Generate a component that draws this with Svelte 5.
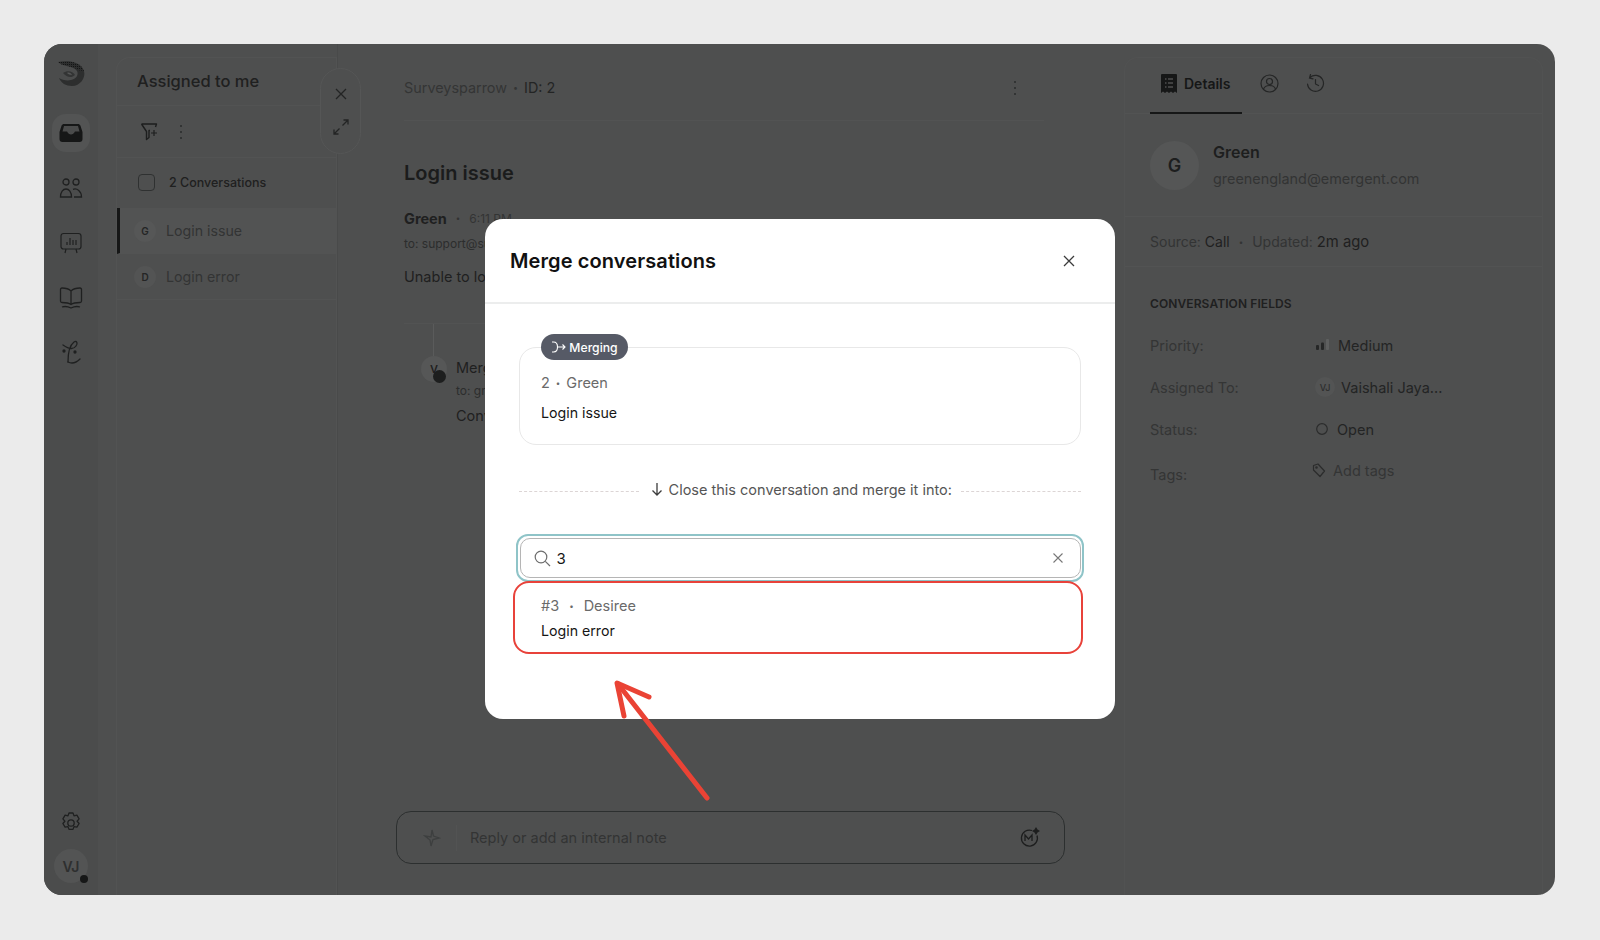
<script>
  const fields = [
    { label: 'Priority:', value: 'Medium', kind: 'priority' },
    { label: 'Assigned To:', value: 'Vaishali Jaya...', kind: 'user' },
    { label: 'Status:', value: 'Open', kind: 'status' },
    { label: 'Tags:', value: 'Add tags', kind: 'tags' }
  ];
</script>

<div class="app">
  <nav class="rail">
    <div class="logo">
      <svg width="32" height="32" viewBox="0 0 32 32" fill="none">
        <defs>
          <pattern id="speck" width="2" height="2" patternUnits="userSpaceOnUse"><rect width="1" height="1" fill="#141515"/></pattern>
        </defs>
        <path d="M3 4C12 2 26 3 29 13c2 7-4 15-12 15-6 0-11-3-13-8 3 2 8 3 12 2 5-1 8-5 6-9-2-3-6-4-10-5C8 7 5 6 3 4z" fill="#2d2e2e"/>
        <path d="M3 4C12 2 26 3 29 13l-7-1c-2-3-6-3-10-4C8 7 5 6 3 4z" fill="url(#speck)"/>
        <path d="M8 15c4-3 10-2 12 2-3 3-8 3-12-2z" fill="#333434"/>
        <path d="M12 15c2-1 4 0 5 2-2 0-4-1-5-2z" fill="#555656"/>
      </svg>
    </div>
    <div class="rail-item first"><span class="active">
      <svg width="24" height="20" viewBox="0 0 24 20"><path d="M5 1h14c1 0 2 .6 2.400 1.600L23.500 9v7a3 3 0 0 1-3 3h-17a3 3 0 0 1-3-3V9L2.600 2.600C3 1.600 4 1 5 1z" fill="#161717"/><path d="M3.500 8.500 5 3h14l1.500 5.500h-4.500c-1 2-2.500 3-4 3s-3-1-4-3z" fill="#4a4b4b"/></svg>
    </span></div>
    <div class="rail-item">
      <svg width="24" height="22" viewBox="0 0 24 22" fill="none" stroke="#1f2020" stroke-width="1.300"><circle cx="7" cy="5" r="3"/><circle cx="17" cy="5" r="3"/><path d="M1.500 20c0-5 2.500-8 5.500-8s5.500 3 5.500 8z"/><path d="M14 12.300c4-1.500 8.500 2 8.500 7.700H15"/></svg>
    </div>
    <div class="rail-item">
      <svg width="24" height="24" viewBox="0 0 24 24" fill="none" stroke="#1f2020" stroke-width="1.200"><rect x="2" y="2.500" width="20" height="15.500" rx="2.500"/><path d="M8 14v-3M11 14V7M14 14V9M17 14v-5M7 18l-1 4M17 18l1 4" /></svg>
    </div>
    <div class="rail-item">
      <svg width="24" height="24" viewBox="0 0 24 24" fill="none" stroke="#1f2020" stroke-width="1.300"><path d="M12 5c-2-2-5-3-9-3-1 0-1.500.5-1.500 1.500V15c0 1 .5 1.500 1.500 1.500 4 0 7 .5 9 2 2-1.500 5-2 9-2 1 0 1.500-.5 1.500-1.500V3.500C22.500 2.500 22 2 21 2c-4 0-7 1-9 3zM12 5v13.500M3 21c3-1 6-.5 9 1 3-1.500 6-2 9-1"/></svg>
    </div>
    <div class="rail-item">
      <svg width="44" height="44" viewBox="0 0 44 44" fill="none" stroke="#1f2020" stroke-width="1.300" stroke-linecap="round"><path d="M19 31C19 22 21 14 25 11c3-2 4 2 2 4-2 3-6 4-13-1"/><path d="M19 31c4 2 8 1 12-3"/><circle cx="15" cy="20" r="1" fill="#1f2020"/><circle cx="26" cy="21" r="1" fill="#1f2020"/></svg>
    </div>
    <div class="rail-bottom">
      <svg width="24" height="24" viewBox="0 0 24 24" fill="none" stroke="#1f2020" stroke-width="1.300"><circle cx="12" cy="12" r="3.200"/><path d="M10 2h4l1 2.800 2.900-.6 2.200 3.700-2 2.300 2 2.300-2.200 3.700-2.900-.6-1 2.800h-4l-1-2.800-2.900.6-2.200-3.700 2-2.300-2-2.300 2.200-3.700 2.900.6z" stroke-linejoin="round"/></svg>
      <div class="me">VJ<i></i></div>
    </div>
  </nav>

  <section class="list">
    <header class="list-title">Assigned to me</header>
    <div class="toolbar">
      <svg width="19" height="19" viewBox="0 0 19 19" fill="none" stroke="#1d1e1e" stroke-width="1.400" stroke-linejoin="round"><path d="M1.500 2h15l-1 3M10 8.500h-1v7l-2.500 2v-8L1.500 2"/><path d="M14 8v6M11 11h6" stroke-width="1.200"/></svg>
      <span class="vdots"><i></i><i></i><i></i></span>
    </div>
    <div class="count"><span class="check"></span>2 Conversations</div>
    <div class="row selected"><span class="dot">G</span>Login issue</div>
    <div class="row"><span class="dot">D</span>Login error</div>
  </section>

  <section class="main">
    <div class="crumbs"><span>Surveysparrow</span><b>•</b><em>ID: 2</em><span class="vdots push"><i></i><i></i><i></i></span></div>
    <h1>Login issue</h1>
    <div class="from"><strong>Green</strong><b>•</b><small>6:11 PM</small></div>
    <div class="to">to: support@su</div>
    <p class="msg">Unable to log</p>
    <div class="thread">
      <div class="thread-line"></div>
      <div class="thread-avatar">V<i></i></div>
      <div class="thread-body">
        <div class="thread-name">Merge</div>
        <div class="thread-to">to: gre</div>
        <div class="thread-msg">Conv</div>
      </div>
    </div>
    <div class="composer">
      <svg width="18" height="18" viewBox="0 0 18 18" fill="none" stroke="#3d3f3f" stroke-width="1.300"><path d="M9 1l1.500 6L16 9l-6 1.500L8 17l-1-6-5-4 6 1z"/></svg>
      <span class="sep"></span>
      <span class="placeholder">Reply or add an internal note</span>
      <svg class="ai" width="22" height="22" viewBox="0 0 22 22" fill="none" stroke="#1d1e1e" stroke-width="1.300"><path d="M14 3.500a8 8 0 1 0 5 5"/><path d="M7 14V8l3.500 4L14 8v6"/><path d="M18 0l1.500 2.500L22 4l-2.500 1.500L18 8l-1.500-2.500L14 4l2.500-1.500z" fill="#1d1e1e" stroke="none"/></svg>
    </div>
  </section>

  <aside class="side">
    <div class="tabs">
      <div class="tab">
        <svg width="16" height="19" viewBox="0 0 16 19"><path d="M1 0h14a1 1 0 0 1 1 1v18l-2-1.500L12 19l-2-1.500L8 19l-2-1.500L4 19l-2-1.500L0 19V1a1 1 0 0 1 1-1z" fill="#161717"/><path d="M4 5h1.500M7 5h5M4 9h1.500M7 9h5M4 13h1.500M7 13h5" stroke="#4f4f4f" stroke-width="1.400"/></svg>
        Details
      </div>
      <svg class="tab-i1" width="19" height="19" viewBox="0 0 19 19" fill="none" stroke="#252626" stroke-width="1.200"><circle cx="9.500" cy="9.500" r="8.500"/><circle cx="9.500" cy="7.500" r="3"/><path d="M3.500 15c1-2.500 3.500-3.500 6-3.500s5 1 6 3.500"/></svg>
      <svg class="tab-i2" width="19" height="19" viewBox="0 0 19 19" fill="none" stroke="#252626" stroke-width="1.200" stroke-linecap="round"><path d="M4 3.500A8 8 0 1 1 1.500 10M4.500 0.500 3.500 4l3.500.8M9.500 5.500V10l3 1.500"/></svg>
    </div>
    <div class="contact">
      <div class="big">G</div>
      <div><div class="c-name">Green</div><div class="c-mail">greenengland@emergent.com</div></div>
    </div>
    <div class="meta">Source: <strong>Call</strong><b>•</b>Updated: <strong>2m ago</strong></div>
    <h2>CONVERSATION FIELDS</h2>
    <div class="fields">
      {#each fields as f}
        <div class="field" class:tagrow={f.kind === 'tags'}>
          <span class="f-label">{f.label}</span>
          <span class="f-value" class:muted={f.kind === 'tags'}>
            {#if f.kind === 'priority'}
              <svg width="15" height="12" viewBox="0 0 15 12"><rect x="1" y="6" width="3" height="5" rx="1" fill="#262727"/><rect x="6" y="3.500" width="3" height="7.500" rx="1" fill="#262727"/><rect x="11" y="0" width="3" height="11" rx="1" fill="#5e5f5f"/></svg>
            {:else if f.kind === 'user'}
              <span class="vj">VJ</span>
            {:else if f.kind === 'status'}
              <svg width="14" height="14" viewBox="0 0 14 14" fill="none" stroke="#2b2c2c" stroke-width="1.200"><circle cx="7" cy="7" r="5.300"/></svg>
            {:else}
              <svg width="14" height="15" viewBox="0 0 14 15" fill="none" stroke="#2b2c2c" stroke-width="1.200" stroke-linejoin="round"><path d="M1.500 2.500 6 1l6.500 7-4.500 5.500-6.500-6.500z"/><circle cx="4.500" cy="4.500" r=".7"/></svg>
            {/if}
            {f.value}
          </span>
        </div>
      {/each}
    </div>
  </aside>

  <div class="pill">
    <svg width="12" height="12" viewBox="0 0 12 12" stroke="#232424" stroke-width="1.300"><path d="M1 1l10 10M11 1 1 11"/></svg>
    <svg width="16" height="16" viewBox="0 0 16 16" fill="none" stroke="#232424" stroke-width="1.300"><path d="M9.500 6.500 15 1M10.500 1H15v4.500M6.500 9.500 1 15M1 10.500V15h4.500"/></svg>
  </div>

  <div class="modal">
    <header class="m-head">
      <h3>Merge conversations</h3>
      <svg width="12" height="12" viewBox="0 0 12 12" stroke="#3b3b3b" stroke-width="1.300"><path d="M1 1l10 10M11 1 1 11"/></svg>
    </header>
    <div class="m-body">
      <div class="card">
        <span class="badge">
          <svg width="15" height="12" viewBox="0 0 15 12" fill="none" stroke="#fff" stroke-width="1.100"><path d="M1 1h1.500c3 0 4 2 4 5s-1 5-4 5H1M6.500 6H14M11.500 3.500 14 6l-2.500 2.500"/></svg>
          Merging
        </span>
        <div class="sub first-sub">2<b>•</b>Green</div>
        <div class="subject first">Login issue</div>
      </div>
      <div class="note">
        <span class="dash"></span>
        <svg width="12" height="14" viewBox="0 0 12 14" fill="none" stroke="#3d3d3d" stroke-width="1.300"><path d="M6 1v12M1.500 8.500 6 13l4.500-4.500"/></svg>
        <span class="note-text">Close this conversation and merge it into:</span>
        <span class="dash"></span>
      </div>
      <div class="search">
        <div class="search-in">
          <svg width="17" height="17" viewBox="0 0 17 17" fill="none" stroke="#6d6d6d" stroke-width="1.200"><circle cx="7" cy="7" r="5.800"/><path d="M11.300 11.300 16 16"/></svg>
          <span class="q">3</span>
          <svg class="clear" width="10" height="10" viewBox="0 0 10 10" stroke="#777" stroke-width="1.100"><path d="M.5.5l9 9M9.500.5l-9 9"/></svg>
        </div>
      </div>
      <div class="result">
        <div class="sub">#3<b>•</b>Desiree</div>
        <div class="subject">Login error</div>
      </div>
    </div>
  </div>

  <svg class="pointer" width="110" height="130" viewBox="0 0 110 130" fill="none" stroke="#ea4335" stroke-width="5" stroke-linecap="round" stroke-linejoin="round">
    <path d="M97 123 8 9"/>
    <path d="M39 22 7 8l7 33"/>
  </svg>
</div>

<style>
  :global(body) { margin: 0; background: #ebebeb; }
  * { box-sizing: border-box; }
  .app {
    position: relative; display: flex; width: 1511px; height: 851px; margin: 44px 0 0 44px;
    background: #4e4f4f; border-radius: 18px; overflow: hidden;
    font-family: Inter, "Liberation Sans", sans-serif; color: #1f2020;
  }
  .rail { width: 54px; flex: none; display: flex; flex-direction: column; align-items: center; background: #4b4c4c; }
  .logo { height: 62px; padding-top: 14px; }
  .rail-item { height: 55px; width: 100%; display: flex; align-items: center; justify-content: center; flex: none; }
  .rail-item.first { height: 54px; }
  .active { width: 38px; height: 38px; border-radius: 14px; background: #535454; display: flex; align-items: center; justify-content: center; }
  .rail-bottom { margin-top: auto; display: flex; flex-direction: column; align-items: center; gap: 14px; padding-bottom: 12px; }
  .me { position: relative; width: 34px; height: 34px; border-radius: 50%; background: #535454; display: flex; align-items: center; justify-content: center; font-size: 14px; font-weight: 600; color: #2e2f2f; }
  .me i { position: absolute; right: 0; bottom: 0; width: 8px; height: 8px; border-radius: 50%; background: #161717; }

  .list { width: 221px; flex: none; margin: 13px 0 0 18px; border: 1px solid #525353; border-width: 1px 1px 0 1px; border-radius: 14px 0 0 0; }
  .list-title { height: 48px; display: flex; align-items: center; padding: 0 0 2px 20px; font-size: 16.500px; font-weight: 500; color: #1f2020; border-bottom: 1px solid #525353; }
  .toolbar { height: 52px; display: flex; align-items: center; gap: 21px; padding-left: 23px; border-bottom: 1px solid #525353; }
  .vdots { display: inline-flex; flex-direction: column; gap: 4px; }
  .vdots i { width: 2px; height: 2px; border-radius: 50%; background: #2a2b2b; }
  .count { height: 50px; display: flex; align-items: center; gap: 14px; padding: 0 0 2px 21px; font-size: 12.500px; font-weight: 500; color: #1f2020; }
  .check { width: 17px; height: 17px; border: 1.500px solid #2f3131; border-radius: 4px; }
  .row { height: 46px; display: flex; align-items: center; gap: 10px; padding-left: 17px; font-size: 14.200px; color: #333434; border-bottom: 1px solid #525353; }
  .row.selected { background: #525353; border-left: 3px solid #161717; padding-left: 14px; }
  .dot { width: 22px; height: 22px; border-radius: 50%; background: #535454; display: flex; align-items: center; justify-content: center; font-size: 10px; font-weight: 600; color: #242525; }
  .selected .dot { background: #565757; }

  .main { flex: 1; min-width: 0; display: flex; flex-direction: column; padding: 0 84px 31px 66px; border-left: 1px solid #494a4a; }
  .crumbs { height: 77px; flex: none; padding-top: 11px; display: flex; align-items: center; font-size: 14.400px; color: #343535; border-bottom: 1px solid #525353; }
  .crumbs b { margin: 0 6px; font-size: 9px; font-weight: 400; }
  .crumbs em { font-style: normal; color: #232424; }
  .push { margin-left: auto; margin-right: 28px; }
  h1 { margin: 34px 0 0; font-size: 20px; line-height: 36px; font-weight: 600; color: #1b1c1c; }
  .from { margin-top: 17px; height: 20px; display: flex; align-items: center; font-size: 14.500px; }
  .from strong { font-weight: 700; }
  .from b { margin: 0 9px; font-size: 8px; font-weight: 400; color: #333; }
  .from small { font-size: 12px; color: #333434; }
  .to { margin-top: 7px; font-size: 12px; line-height: 18px; color: #2c2d2d; }
  .msg { margin: 14px 0 0; font-size: 14.500px; line-height: 20px; color: #1f2020; }
  .thread { position: relative; margin-top: 36px; border-top: 1px solid #525353; padding: 34px 0 0 52px; }
  .thread-line { position: absolute; left: 29px; top: 0; height: 34px; border-left: 1px solid #5a5b5b; }
  .thread-avatar { position: absolute; left: 17px; top: 32px; width: 26px; height: 26px; border-radius: 50%; background: #565757; display: flex; align-items: center; justify-content: center; font-size: 11px; font-weight: 600; }
  .thread-avatar i { position: absolute; right: 1px; bottom: -1px; width: 13px; height: 13px; border-radius: 50%; background: #1d1e1e; }
  .thread-name { font-size: 14.500px; line-height: 20px; color: #1f2020; }
  .thread-to { margin-top: 4px; font-size: 12px; line-height: 18px; color: #2c2d2d; }
  .thread-msg { margin-top: 6px; font-size: 14.500px; line-height: 20px; color: #1f2020; }
  .composer { margin-top: auto; height: 53px; flex: none; display: flex; align-items: center; padding: 0 24px 0 26px; border: 1.500px solid #2c2f2f; border-radius: 15px; margin-left: -8px; margin-right: -21px; }
  .sep { width: 1px; height: 26px; background: #525353; margin: 0 13px 0 15px; }
  .placeholder { font-size: 14.500px; color: #333434; }
  .ai { margin-left: auto; }

  .side { width: 419px; flex: none; margin: 13px 12px 0 -4px; border: 1px solid #515252; border-width: 1px 1px 0 1px; border-radius: 14px 14px 0 0; padding: 0; }
  .tabs { position: relative; height: 56px; padding-left: 25px; border-bottom: 1px solid #525353; }
  .tab { width: 92px; height: 56px; display: flex; align-items: center; gap: 7px; padding: 0 0 4px 11px; font-size: 14px; font-weight: 600; color: #161717; border-bottom: 2px solid #161717; }
  .tab-i1 { position: absolute; left: 135px; top: 16px; }
  .tab-i2 { position: absolute; left: 181px; top: 16px; }
  .contact { height: 103px; padding: 27px 0 0 25px; display: flex; gap: 14px; border-bottom: 1px solid #525353; }
  .big { width: 49px; height: 49px; border-radius: 50%; background: #555656; display: flex; align-items: center; justify-content: center; font-size: 18px; font-weight: 600; color: #1d1e1e; }
  .c-name { font-size: 16px; font-weight: 600; line-height: 22px; color: #1d1e1e; }
  .c-mail { font-size: 14.400px; margin-top: 6px; line-height: 20px; color: #333434; }
  .meta { height: 50px; padding-left: 25px; display: flex; align-items: center; font-size: 14px; color: #333434; border-bottom: 1px solid #525353; white-space: pre; }
  .meta strong { font-weight: 400; color: #1f2020; }
  .meta strong:last-child { font-size: 14.800px; }
  .meta b { margin: 0 9px; font-size: 8px; font-weight: 400; }
  h2 { margin: 29px 0 0 25px; font-size: 12px; line-height: 16px; font-weight: 600; color: #1f2020; letter-spacing: .1px; }
  .fields { margin: 12px 0 0 25px; display: flex; flex-direction: column; }
  .field { height: 42px; display: grid; grid-template-columns: 165px 1fr; align-items: center; font-size: 14.500px; }
  .f-label { color: #343535; }
  .f-value { display: flex; align-items: center; gap: 8px; color: #232424; }
  .f-value.muted { color: #343535; gap: 7px; margin: -8px 0 0 -3px; }
  .tagrow { margin-top: 3px; }
  .vj { width: 20px; height: 20px; border-radius: 50%; background: #535454; display: flex; align-items: center; justify-content: center; font-size: 9px; font-weight: 500; color: #2c2d2d; margin-right: -2px; }

  .pill { position: absolute; left: 276px; top: 24px; width: 41px; height: 86px; border: 1px solid #555656; border-radius: 21px; background: #4e4f4f; display: flex; flex-direction: column; align-items: center; gap: 19px; padding-top: 19px; }

  .modal { position: absolute; left: 441px; top: 175px; width: 630px; height: 500px; background: #fff; border-radius: 18px; }
  .m-head { height: 85px; display: flex; align-items: center; justify-content: space-between; padding: 0 40px 0 25px; border-bottom: 2px solid #eceded; }
  h3 { margin: 0; font-size: 20px; font-weight: 600; color: #111; letter-spacing: .1px; }
  .m-body { padding: 0 34px 0 33.500px; }
  .card { position: relative; margin-top: 43px; height: 98px; border: 1.500px solid #e8e8e8; border-radius: 17px; padding: 25px 0 0 21.500px; }
  .badge { position: absolute; left: 21.500px; top: -14px; height: 26px; width: 87px; border-radius: 13px; background: #565a66; color: #fff; display: flex; align-items: center; justify-content: center; gap: 3px; font-size: 12.200px; font-weight: 500; }
  .sub { font-size: 14.500px; line-height: 20px; color: #6a6a6a; display: flex; align-items: center; }
  .sub b { margin: 0 8px; font-size: 8px; font-weight: 400; }
  .first-sub b { margin: 0 6px; }
  .subject { margin-top: 5px; font-size: 14.200px; line-height: 20px; color: #161616; }
  .subject.first { margin-top: 10px; }
  .note { margin: 32px 0 0; height: 24px; display: flex; align-items: center; }
  .dash { flex: 1; margin-top: 4px; border-top: 1.500px dashed #dcd5d5; }
  .note svg { margin: 0 6px 0 12px; }
  .note-text { font-size: 14.500px; color: #555; margin-right: 9px; }
  .search { margin: 33px -3px 0 -2.500px; height: 48px; padding: 2px 1.500px; border: 2px solid #8fc4c8; border-radius: 12px; }
  .search-in { height: 100%; display: flex; align-items: center; padding: 0 17px 0 13px; border: 1.500px solid #b5b5b5; border-radius: 10px; }
  .q { margin-left: 6px; font-size: 15px; color: #161616; }
  .clear { margin-left: auto; }
  .result { margin: -1px -2px 0 -5.500px; height: 73px; padding: 13px 0 0 26px; border: 2.500px solid #e8423a; border-radius: 16px; }
  .result .sub b { margin: 0 10px; }
  .pointer { position: absolute; left: 566px; top: 631px; }
</style>
